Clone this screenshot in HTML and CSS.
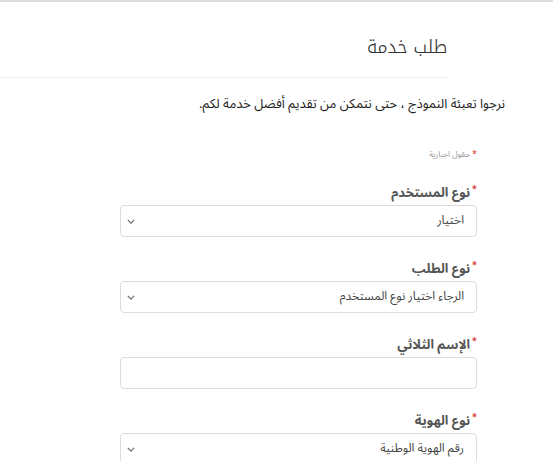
FILE: index.html
```html
<!DOCTYPE html>
<html lang="ar" dir="rtl">
<head>
<meta charset="utf-8">
<link rel="stylesheet" href="styles.css">
</head>
<body>
<div class="page">
  <header class="head">
    <h1 class="title">طلب خدمة</h1>
  </header>
  <p class="intro">نرجوا تعبئة النموذج ، حتى نتمكن من تقديم أفضل خدمة لكم.</p>
  <form class="form">
    <div class="note"><span class="req">*</span> حقول اجبارية</div>
    <div class="group">
      <label class="label"><span class="req">*</span>نوع المستخدم</label>
      <div class="field select"><span class="value">اختيار</span><svg class="chev" viewBox="0 0 10 6" width="8" height="5"><path d="M1 1l4 4 4-4" fill="none" stroke="#666" stroke-width="1.4"/></svg></div>
    </div>
    <div class="group">
      <label class="label"><span class="req">*</span>نوع الطلب</label>
      <div class="field select"><span class="value">الرجاء اختيار نوع المستخدم</span><svg class="chev" viewBox="0 0 10 6" width="8" height="5"><path d="M1 1l4 4 4-4" fill="none" stroke="#666" stroke-width="1.4"/></svg></div>
    </div>
    <div class="group">
      <label class="label"><span class="req">*</span>الإسم الثلاثي</label>
      <div class="field"></div>
    </div>
    <div class="group">
      <label class="label"><span class="req">*</span>نوع الهوية</label>
      <div class="field select"><span class="value">رقم الهوية الوطنية</span><svg class="chev" viewBox="0 0 10 6" width="8" height="5"><path d="M1 1l4 4 4-4" fill="none" stroke="#666" stroke-width="1.4"/></svg></div>
    </div>
  </form>
</div>
</body>
</html>
```
FILE: styles.css
```css
html, body {
  margin: 0;
  padding: 0;
  background: #fff;
  overflow: hidden;
}
body {
  font-family: "Noto Sans Arabic", "Noto Kufi Arabic", "DejaVu Sans", sans-serif;
  color: #333;
  border-top: 2px solid #dcdcdc;
}
.page {
  display: flex;
  flex-direction: column;
}
.head {
  margin-right: 106px;
  height: 75px;
  border-bottom: 1px solid #eee;
  display: flex;
  align-items: center;
}
.title {
  margin: 0;
  padding-top: 14px;
  font-family: "Noto Kufi Arabic", "Noto Sans Arabic", sans-serif;
  font-size: 18px;
  line-height: 30px;
  font-weight: 300;
  color: #333;
}
.intro {
  margin: 16px 48px 0 0;
  font-size: 13px;
  line-height: 20px;
  color: #222;
}
.form {
  margin: 0 76px 0 0;
  width: 357px;
  display: flex;
  flex-direction: column;
}
.note {
  margin-top: 35px;
  font-size: 8px;
  line-height: 12px;
  color: #999;
  height: 12px;
}
.req {
  color: #d33;
  font-size: 9px;
  line-height: 9px;
  vertical-align: super;
  margin-left: 2px;
}
.note .req {
  vertical-align: baseline;
  margin-left: 0;
}
.group {
  display: flex;
  flex-direction: column;
  margin-top: 23px;
}
.label {
  font-size: 13px;
  font-weight: bold;
  color: #555;
  height: 18px;
  line-height: 18px;
  margin-bottom: 3px;
}
.field {
  height: 30px;
  border: 1px solid #ddd;
  border-radius: 4px;
  display: flex;
  align-items: center;
  justify-content: space-between;
  padding: 0 12px 0 6px;
}
.value {
  font-size: 12px;
  line-height: 16px;
  color: #444;
}
.chev {
  display: block;
}
```
